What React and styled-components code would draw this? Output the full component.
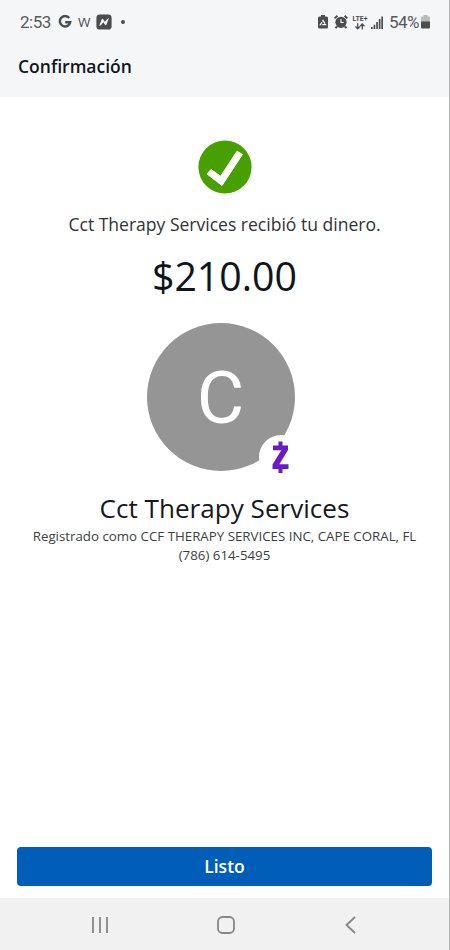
import React from 'react'
import styled, { createGlobalStyle } from 'styled-components'

const GlobalStyle = createGlobalStyle`
  * {
    box-sizing: border-box;
  }

  body {
    margin: 0;
    background: #fff;
    font-family: 'Open Sans', 'Noto Sans', sans-serif;
  }
`

const Screen = styled.div`
  display: flex;
  flex-direction: column;
  width: 450px;
  height: 950px;
  overflow: hidden;
  background: #fff;
  border-right: 1px solid #b4b5b7;
`

const Header = styled.header`
  height: 97px;
  flex: none;
  background: #f5f6f8;
`

const StatusBar = styled.div`
  display: flex;
  align-items: center;
  justify-content: space-between;
  height: 44px;
  padding: 0 19px 0 20px;
  color: #4b4c4e;
  font-family: Roboto, sans-serif;
`

const StatusGroup = styled.div`
  display: flex;
  align-items: center;
`

const StatusText = styled.span`
  width: ${({ $width }) => $width}px;
  margin-left: ${({ $gap }) => $gap || 0}px;
  color: #58595b;
  font-size: 17px;
  line-height: 20px;
  letter-spacing: ${({ $spacing }) => $spacing || 0}px;
  white-space: nowrap;
`

const Icon = styled.svg`
  display: block;
  flex: none;
  margin-left: ${({ $gap }) => $gap || 0}px;
`

const WordMark = styled.span`
  width: 13px;
  margin-left: 6px;
  font: 500 13.5px/20px 'Open Sans', sans-serif;
`

const Dot = styled.span`
  width: 4px;
  height: 4px;
  margin-left: 9px;
  border-radius: 50%;
  background: #4b4c4e;
`

const Network = styled.span`
  display: flex;
  flex-direction: column;
  align-items: center;
  width: 16px;
  margin-left: 4px;
  font: 700 7px/8px Roboto, sans-serif;
`

const Title = styled.h1`
  margin: 0;
  padding-left: 18px;
  color: #11161d;
  font-size: 17.5px;
  font-weight: 600;
  line-height: 44px;
`

const Content = styled.main`
  display: flex;
  flex: 1;
  flex-direction: column;
  align-items: center;
  padding-top: 43px;
`

const Message = styled.p`
  margin: 18px 0 0;
  color: #303337;
  font-size: 17.55px;
  line-height: 24px;
  white-space: nowrap;
`

const Amount = styled.p`
  margin: 15px 0 0;
  color: #10151b;
  font-size: 39.3px;
  line-height: 50px;
`

const Avatar = styled.div`
  position: relative;
  display: flex;
  align-items: center;
  justify-content: center;
  width: 148px;
  height: 148px;
  margin: 22px 8px 0 0;
  padding-top: 2px;
  border-radius: 50%;
  background: #959595;
  color: #fff;
  font: 400 73px/88px Roboto, sans-serif;
`

const Badge = styled.span`
  position: absolute;
  right: -8px;
  bottom: -8px;
  display: flex;
  align-items: center;
  justify-content: center;
  width: 44px;
  height: 44px;
  border-radius: 50%;
  background: #fff;
`

const Name = styled.h2`
  margin: 19px 0 0;
  color: #16191d;
  font-size: 26.1px;
  font-weight: 400;
  line-height: 37px;
  white-space: nowrap;
`

const Detail = styled.p`
  margin: 0;
  color: #3b3e42;
  font-size: 13.3px;
  line-height: 19px;
  white-space: nowrap;
`

const Footer = styled.footer`
  padding: 0 17px 12px 17px;
`

const Button = styled.button`
  display: block;
  width: 100%;
  height: 39px;
  padding: 0;
  border: 0;
  border-radius: 4px;
  background: #005eb8;
  color: #fff;
  font: 600 17.5px/39px 'Open Sans', sans-serif;
`

const NavBar = styled.nav`
  display: flex;
  align-items: center;
  justify-content: space-between;
  height: 52px;
  padding: 2px 92px 0 91px;
  background: #f1f1f1;
`

const GoogleIcon = () => (
  <Icon $gap={7} width="14" height="14" viewBox="0 0 14 14" fill="none" stroke="currentColor" strokeWidth="2.4">
    <path d="M11.2 3.1A5.2 5.2 0 1 0 12.2 7.2H7.2" />
  </Icon>
)

const NewsIcon = () => (
  <Icon $gap={5} width="16" height="16" viewBox="0 0 16 16">
    <rect x=".4" y=".4" width="15.2" height="15.2" rx="3.4" fill="currentColor" />
    <path d="M3.2 12 5.700 5.300Q6 4.500 6.800 5L9 7.800Q10.500 5 13 4l-2.500 6.500Q10 11.500 9.300 11L7.200 8.300Q5.800 11 3.200 12z" fill="#f5f6f8" />
  </Icon>
)

const SaverIcon = () => (
  <Icon width="10" height="14" viewBox="0 0 10 14">
    <path d="M3 0h4v1.5h1.5Q10 1.5 10 3v9q0 1.5-1.5 1.5h-7Q0 13.5 0 12V3q0-1.5 1.5-1.5H3z" fill="currentColor" />
    <path d="M5 5.4 7.6 9.7H2.4z" fill="none" stroke="#f5f6f8" strokeWidth="1.3" strokeDasharray="3.7 1" />
  </Icon>
)

const AlarmIcon = () => (
  <Icon $gap={6} width="14" height="14" viewBox="0 0 14 14">
    <circle cx="7" cy="7.3" r="5.6" fill="currentColor" />
    <path d="M.7 3.4 3.4.8M13.3 3.4 10.6.8M3 11.5l-1.5 1.7M11 11.5l1.5 1.7" stroke="currentColor" strokeWidth="2" />
    <path d="M7 4v3.5h2.8" fill="none" stroke="#f5f6f8" strokeWidth="1.2" />
  </Icon>
)

const ArrowsIcon = () => (
  <Icon width="10" height="7" viewBox="0 0 10 7" fill="none" stroke="currentColor" strokeWidth="1.3">
    <path d="M2.7.3v5.2M.5 3.5l2.2 2.3 2.2-2.3M7.3 6.5V1.2M5.1 3.3 7.3 1l2.2 2.3" />
  </Icon>
)

const SignalIcon = () => (
  <Icon $gap={3} width="12" height="13" viewBox="0 0 12 13" fill="currentColor">
    <path d="M0 11h1.7v2H0zM2.6 8.8h1.7V13H2.6zM5.2 6h1.7v7H5.2zM7.8 3h1.7v10H7.8zM10.3.5H12V13h-1.7z" />
  </Icon>
)

const BatteryIcon = () => (
  <Icon $gap={2} width="9" height="14" viewBox="0 0 9 14">
    <path d="M2.5 0h4v1.5H8q1 0 1 1V7H0V2.5q0-1 1-1h1.5z" fill="#b9babc" />
    <path d="M0 6.5h9v6q0 1-1 1H1q-1 0-1-1z" fill="currentColor" />
  </Icon>
)

const SuccessIcon = () => (
  <Icon width="54" height="54" viewBox="0 0 54 54">
    <circle cx="27" cy="27" r="26.6" fill="#48a000" />
    <path
      d="M9 34 13 29.500 22.700 36.200 39 11.200 44.400 14.400 24 45.500z"
      fill="#fff"
      stroke="#fff"
      strokeLinejoin="round"
    />
  </Icon>
)

const ZelleIcon = () => (
  <Icon width="17" height="32" viewBox="0 0 17 32" fill="#6a1bc5">
    <path d="M6.500.5h4v4H16V9L7.300 23.300H16.500V28h-6v4h-4v-4H.5v-4.500L9.300 9.200H1V4.500h5.500z" />
  </Icon>
)

const App = () => (
  <>
    <GlobalStyle />
    <Screen>
      <Header>
        <StatusBar>
          <StatusGroup>
            <StatusText $width={31} $spacing={-0.5}>2:53</StatusText>
            <GoogleIcon />
            <WordMark>W</WordMark>
            <NewsIcon />
            <Dot />
          </StatusGroup>
          <StatusGroup>
            <SaverIcon />
            <AlarmIcon />
            <Network>
              LTE+
              <ArrowsIcon />
            </Network>
            <SignalIcon />
            <StatusText $width={30} $gap={6} $spacing={-0.6}>54%</StatusText>
            <BatteryIcon />
          </StatusGroup>
        </StatusBar>
        <Title>Confirmación</Title>
      </Header>
      <Content>
        <SuccessIcon />
        <Message>Cct Therapy Services recibió tu dinero.</Message>
        <Amount>$210.00</Amount>
        <Avatar>
          C
          <Badge>
            <ZelleIcon />
          </Badge>
        </Avatar>
        <Name>Cct Therapy Services</Name>
        <Detail>Registrado como CCF THERAPY SERVICES INC, CAPE CORAL, FL</Detail>
        <Detail>(786) 614-5495</Detail>
      </Content>
      <Footer>
        <Button>Listo</Button>
      </Footer>
      <NavBar>
        <Icon width="18" height="18" viewBox="0 0 18 18" stroke="#858585" strokeWidth="1.8">
          <path d="M2 1v16M9 1v16M16 1v16" />
        </Icon>
        <Icon width="18" height="18" viewBox="0 0 18 18" fill="none" stroke="#858585" strokeWidth="1.8">
          <rect x="1" y="1" width="16" height="16" rx="4.5" />
        </Icon>
        <Icon width="14" height="18" viewBox="0 0 14 18" fill="none" stroke="#858585" strokeWidth="1.8">
          <path d="m12 1-8.500 8 8.500 8" />
        </Icon>
      </NavBar>
    </Screen>
  </>
)

export default App
